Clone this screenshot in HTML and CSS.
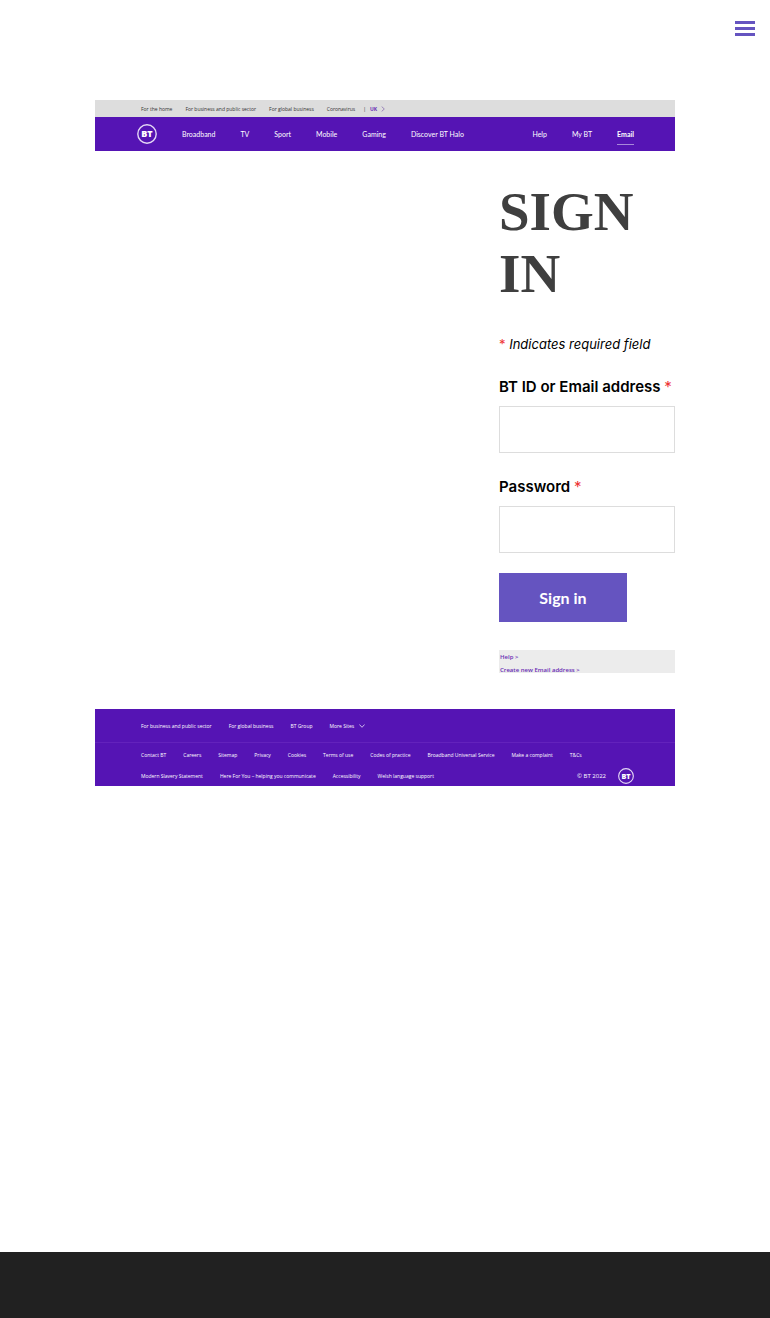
FILE: index.html
```html
<!DOCTYPE html>
<html lang="en">
<head>
<meta charset="utf-8">
<meta name="viewport" content="width=device-width, initial-scale=1">
<title>Sign in</title>
<link rel="stylesheet" href="styles.css">
</head>
<body class="page">
<header class="site-header">
  <button class="menu-button" type="button" aria-label="Menu"><span class="bar"></span><span class="bar"></span><span class="bar"></span></button>
</header>
<main class="content">
  <div class="banner">
    <nav class="sectors" aria-label="Sectors">
      <a href="#">For the home</a><a href="#">For business and public sector</a><a href="#">For global business</a><a href="#">Coronavirus</a>
      <span class="region"><span>|</span><a class="region-link" href="#">UK</a>
        <svg class="chevron-right" viewBox="0 0 4 6" aria-hidden="true"><path d="M.7.6 3.3 3 .7 5.4" fill="none" stroke="#8a6fb0" stroke-width=".8"/></svg></span>
    </nav>
    <nav class="primary" aria-label="Main">
      <svg class="logo" viewBox="0 0 20 20" role="img" aria-label="BT"><circle cx="10" cy="10" r="9.2" fill="none" stroke="#e4d8f5" stroke-width="1.4"/><text class="logo-text" x="10" y="13.2" text-anchor="middle">BT</text></svg>
      <a href="#">Broadband</a><a href="#">TV</a><a href="#">Sport</a><a href="#">Mobile</a><a href="#">Gaming</a><a href="#">Discover BT Halo</a>
      <span class="account"><a href="#">Help</a><a href="#">My BT</a><a class="current" href="#">Email</a></span>
    </nav>
  </div>
  <div class="columns">
    <section class="sign-in">
      <h1 class="title">SIGN IN</h1>
      <form class="form">
        <p class="note"><span class="star">*</span> Indicates required field</p>
        <div class="field">
          <label class="label" for="user">BT ID or Email address <span class="star">*</span></label>
          <input class="input" id="user" type="text">
        </div>
        <div class="field">
          <label class="label" for="pass">Password <span class="star">*</span></label>
          <input class="input" id="pass" type="password">
        </div>
        <button class="submit" type="button">Sign in</button>
      </form>
      <div class="help"><a href="#">Help &gt;</a><a href="#">Create new Email address &gt;</a></div>
    </section>
  </div>
  <div class="links">
    <nav class="links-row links-top" aria-label="Sites">
      <a href="#">For business and public sector</a><a href="#">For global business</a><a href="#">BT Group</a>
      <a class="more" href="#">More Sites <svg class="chevron-down" viewBox="0 0 6 4" aria-hidden="true"><path d="M.4.5 3 3.3 5.6.5" fill="none" stroke="#d9c8f0" stroke-width=".9"/></svg></a>
    </nav>
    <nav class="links-row links-middle" aria-label="Information">
      <a href="#">Contact BT</a><a href="#">Careers</a><a href="#">Sitemap</a><a href="#">Privacy</a><a href="#">Cookies</a><a href="#">Terms of use</a><a href="#">Codes of practice</a><a href="#">Broadband Universal Service</a><a href="#">Make a complaint</a><a href="#">T&amp;Cs</a>
    </nav>
    <div class="links-row links-bottom">
      <a href="#">Modern Slavery Statement</a><a href="#">Here For You – helping you communicate</a><a href="#">Accessibility</a><a href="#">Welsh language support</a>
      <span class="legal"><span class="copyright">© BT 2022</span>
        <svg class="logo-small" viewBox="0 0 20 20" role="img" aria-label="BT"><circle cx="10" cy="10" r="9.2" fill="none" stroke="#e4d8f5" stroke-width="1.4"/><text class="logo-text" x="10" y="13.2" text-anchor="middle">BT</text></svg></span>
    </div>
  </div>
</main>
<footer class="site-footer"></footer>
</body>
</html>
```

FILE: styles.css
```css
* { box-sizing: border-box; }
.page {
  margin: 0;
  min-height: 100vh;
  display: flex;
  flex-direction: column;
  background: #fff;
  color: #000;
  font-family: Inter, "Liberation Sans", sans-serif;
}
a { color: inherit; text-decoration: none; white-space: nowrap; }
svg { display: block; flex: none; }

.site-header { display: flex; justify-content: flex-end; padding: 21px 15px; }
.menu-button {
  display: flex;
  flex-direction: column;
  gap: 3px;
  width: 20px;
  padding: 0;
  border: 0;
  background: none;
}
.bar { height: 3px; width: 100%; background: #6554c0; }

.content { flex: 1; padding: 43px 95px 0; }

.banner, .links { font-family: "Open Sans", sans-serif; }
.sectors {
  display: flex;
  align-items: center;
  gap: 13px;
  height: 17px;
  padding-left: 46px;
  background: #ddd;
  color: #333;
  font-size: 5px;
  line-height: 8px;
  font-weight: 500;
}
.region { display: flex; align-items: center; gap: 4px; margin-left: -5px; }
.region-link { color: #6a2fb5; font-weight: 700; }
.chevron-right { width: 4px; height: 6px; }
.primary {
  display: flex;
  align-items: center;
  gap: 25px;
  height: 34px;
  padding: 0 41px 0 42px;
  background: #5514b4;
  color: #fff;
  font-family: Lato, sans-serif;
  font-size: 7px;
  line-height: 9px;
}
.logo { width: 20px; height: 20px; }
.logo-text { fill: #fff; font: 800 9px "Open Sans", sans-serif; }
.account { display: flex; gap: 25px; margin-left: auto; }
.current { position: relative; font-weight: 700; }
.current::after {
  content: "";
  position: absolute;
  inset: 14px 0 auto;
  height: 1px;
  background: #a888da;
}

.columns { display: grid; grid-template-columns: 1fr 176px; padding: 30px 0 36px; }
.sign-in { grid-column: 2; }
.title {
  margin: 0 0 29px;
  color: #3f3f3f;
  font: 700 55px/62px "Liberation Serif", serif;
}
.note { margin: 0 0 19px; font-size: 13px; line-height: 20px; font-style: italic; white-space: nowrap; }
.star { color: #e33; font-weight: 400; font-style: normal; }
.field { margin-bottom: 20px; }
.label { display: block; margin-bottom: 5px; font-size: 15px; line-height: 28px; font-weight: 600; white-space: nowrap; }
.input {
  display: block;
  width: 100%;
  height: 47px;
  padding: 0 12px;
  border: 1px solid #ddd;
  background: #fff;
  font-size: 14px;
}
.submit {
  display: block;
  width: 128px;
  height: 49px;
  margin-bottom: 28px;
  padding: 0;
  border: 0;
  background: #6554c0;
  color: #fff;
  font: 700 16px Lato, sans-serif;
}
.help {
  display: flex;
  flex-direction: column;
  gap: 5px;
  height: 23px;
  padding: 3px 1px 0;
  overflow: hidden;
  background: #ececec;
  color: #6a2fb5;
  font-family: "Open Sans", sans-serif;
  font-size: 6px;
  line-height: 8px;
  font-weight: 600;
}

.links { background: #5514b4; color: #fff; font-size: 5px; line-height: 8px; font-weight: 500; }
.links-row { display: flex; align-items: center; gap: 17px; padding: 0 41px 0 46px; }
.links-top { height: 34px; border-bottom: 1px solid #6322bc; }
.links-middle { height: 23px; }
.links-bottom { height: 20px; }
.more { display: flex; align-items: center; gap: 5px; }
.chevron-down { width: 6px; height: 4px; }
.legal { display: flex; align-items: center; gap: 12px; margin-left: auto; }
.copyright { font-size: 6px; }
.logo-small { width: 16px; height: 16px; }

.site-footer { height: 66px; background: #212121; }
```
